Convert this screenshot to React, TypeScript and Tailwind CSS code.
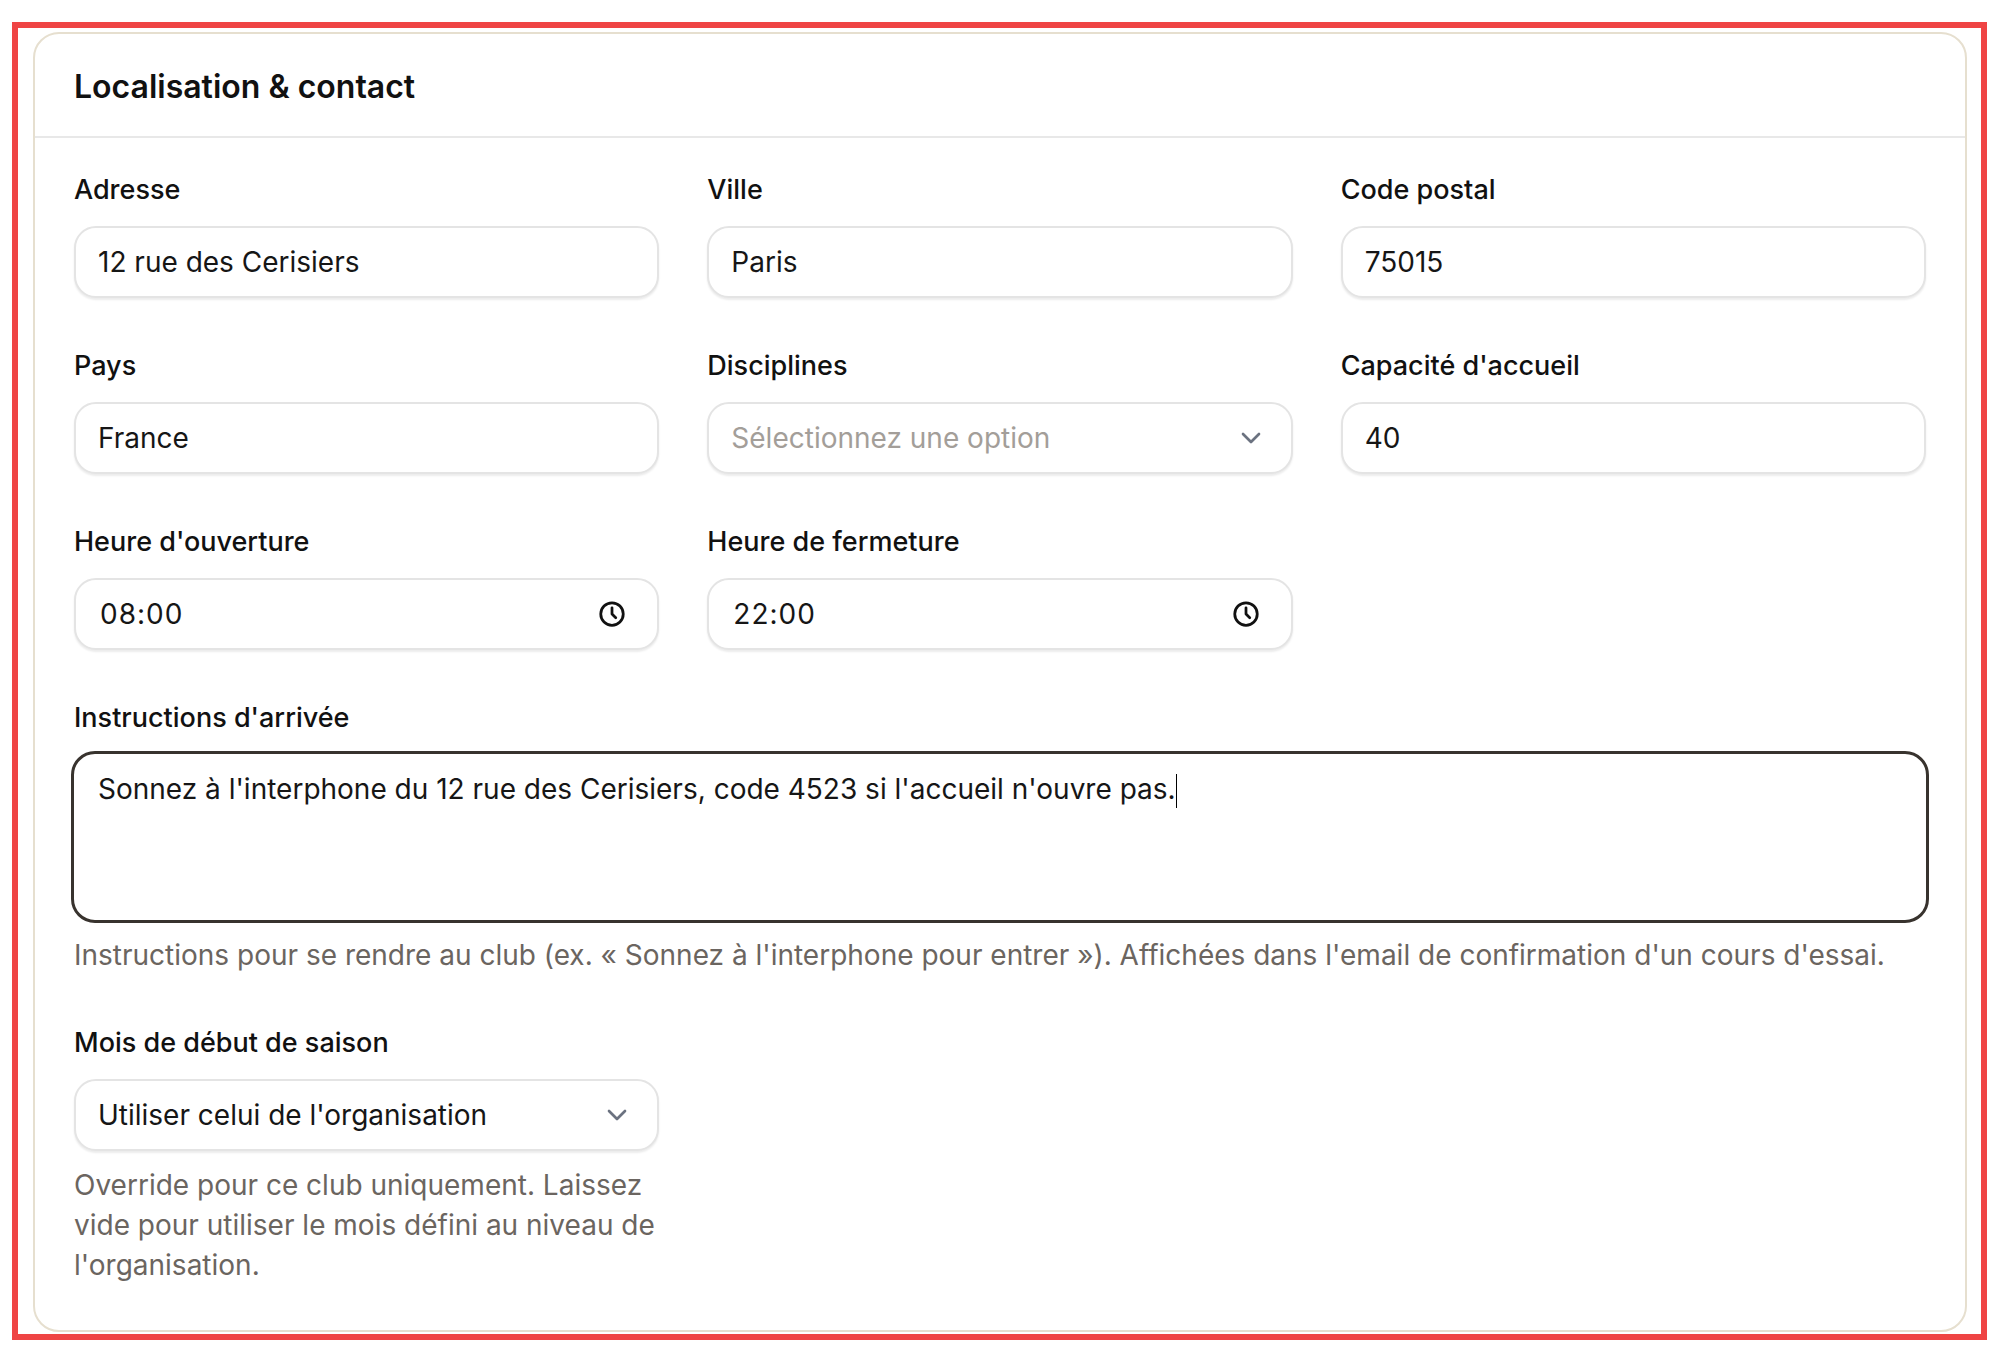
import React from "react";

const Clock = () => (
  <svg width="30" height="30" viewBox="0 0 24 24" fill="none" stroke="#111" strokeWidth="2.2" strokeLinecap="round" strokeLinejoin="round">
    <circle cx="12" cy="12" r="9" />
    <path d="M12 7v5l3 3" />
  </svg>
);
const Chevron = () => (
  <svg width="32" height="32" viewBox="0 0 24 24" fill="none" stroke="#6b7280" strokeWidth="2" strokeLinecap="round" strokeLinejoin="round">
    <path d="M6 9l6 6 6-6" />
  </svg>
);

const inputCls =
  "h-[72px] w-full rounded-[22px] border-2 border-[#e4e4e4] bg-white shadow-[0_2px_2px_rgba(0,0,0,0.08)] px-[22px] flex items-center justify-between text-[28px] text-[#161616]";

function Field({ label, children }: { label: string; children: React.ReactNode }) {
  return (
    <div className="flex flex-col">
      <div className="text-[27px] leading-[32px] font-medium text-[#111] mb-[20px]">{label}</div>
      {children}
    </div>
  );
}

export default function App() {
  return (
    <div className="w-[2000px] h-[1362px] bg-white pt-[22px] pl-[12px]" style={{ fontFamily: "Inter, 'Noto Sans', sans-serif" }}>
      <div className="w-[1975px] h-[1318px] border-[6px] border-[#ef4444] pt-[4px] pl-[15px] pr-[14px]">
        <div className="h-[1300px] rounded-[26px] border-2 border-[#e6dfcf] bg-white">
          <div className="h-[104px] border-b-2 border-[#e8e8e8] px-[39px] flex items-center pt-[4px]">
            <h2 className="text-[32px] font-semibold text-[#111]">Localisation &amp; contact</h2>
          </div>
          <div className="px-[39px] pt-[36px] flex flex-col">
            <div className="grid grid-cols-3 gap-x-[48px] gap-y-[52px]">
              <Field label="Adresse"><div className={inputCls}>12 rue des Cerisiers</div></Field>
              <Field label="Ville"><div className={inputCls}>Paris</div></Field>
              <Field label="Code postal"><div className={inputCls}>75015</div></Field>
              <Field label="Pays"><div className={inputCls}>France</div></Field>
              <Field label="Disciplines"><div className={inputCls}><span className="text-[#a39e99]">Sélectionnez une option</span><span className="mr-[2px]"><Chevron /></span></div></Field>
              <Field label="Capacité d'accueil"><div className={inputCls}>40</div></Field>
              <Field label="Heure d'ouverture"><div className={inputCls}><span className="tracking-[1px] ml-[2px]">08:00</span><span className="mr-[8px]"><Clock /></span></div></Field>
              <Field label="Heure de fermeture"><div className={inputCls}><span className="tracking-[1px] ml-[2px]">22:00</span><span className="mr-[8px]"><Clock /></span></div></Field>
            </div>
            <div className="mt-[52px]">
              <div className="text-[27px] leading-[32px] font-medium text-[#111] mb-[17px]">Instructions d'arrivée</div>
              <div className="-mx-[3px] h-[172px] rounded-[24px] border-[3px] border-[#38332e] px-[24px] pt-[14px] text-[28px] text-[#161616]">
                Sonnez à l'interphone du 12 rue des Cerisiers, code 4523 si l'accueil n'ouvre pas.<span className="inline-block w-[1.5px] h-[34px] bg-black align-middle"></span>
              </div>
              <div className="mt-[12px] text-[28px] leading-[40px] text-[#6b6560]">
                Instructions pour se rendre au club (ex. « Sonnez à l'interphone pour entrer »). Affichées dans l'email de confirmation d'un cours d'essai.
              </div>
            </div>
            <div className="mt-[52px] w-[585px]">
              <div className="text-[27px] leading-[32px] font-medium text-[#111] mb-[20px]">Mois de début de saison</div>
              <div className={inputCls}><span>Utiliser celui de l'organisation</span><span className="mr-[2px]"><Chevron /></span></div>
              <div className="mt-[14px] text-[28px] leading-[40px] text-[#6b6560]">
                Override pour ce club uniquement. Laissez vide pour utiliser le mois défini au niveau de l'organisation.
              </div>
            </div>
          </div>
        </div>
      </div>
    </div>
  );
}
